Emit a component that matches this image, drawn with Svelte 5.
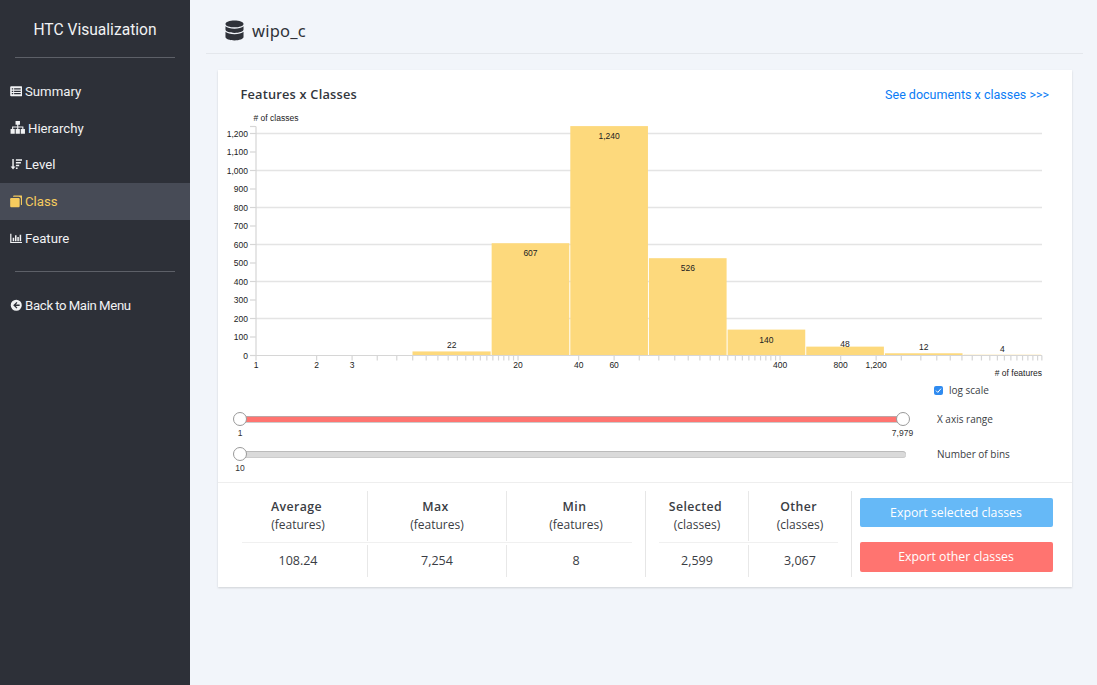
<script>
	const nav = ['Summary', 'Hierarchy', 'Level', 'Class', 'Feature'];

	// chart scales, in page pixels (the svg viewBox starts at the card's corner)
	const x0 = 256;
	const y0 = 355.5;
	const xScale = (v) => x0 + Math.log10(v) * 201.4;
	const yScale = (v) => y0 - v * 0.185;

	const yTicks = Array.from({ length: 13 }, (_, i) => i * 100);
	const xLabels = [1, 2, 3, 20, 40, 60, 400, 800, 1200];

	const xTicks = [];
	for (let v = 1; v <= 20; v += 1) xTicks.push(v);
	for (let v = 40; v <= 400; v += 20) xTicks.push(v);
	for (let v = 800; v <= 7600; v += 400) xTicks.push(v);
	xTicks.push(7979);

	const bins = [22, 607, 1240, 526, 140, 48, 12, 4];
	const binX = 412.5;
	const binW = 78.65;

	const fmt = (n) => n.toLocaleString('en-US');

	const featureStats = [
		{ title: 'Average', value: '108.24' },
		{ title: 'Max', value: '7,254' },
		{ title: 'Min', value: '8' }
	];
	const classStats = [
		{ title: 'Selected', value: '2,599' },
		{ title: 'Other', value: '3,067' }
	];
</script>

<div class="page">
	<aside class="sidebar">
		<div class="brand">HTC Visualization</div>
		<nav class="nav">
			{#each nav as item}
				<div class="nav-item" class:active={item === 'Class'}>
					<svg class="icon" viewBox="0 0 14 14" class:wide={item === 'Hierarchy'}>
						{#if item === 'Summary'}
							<path fill-rule="evenodd" d="M1.3 1.5h11.4a1.1 1.1 0 0 1 1.1 1.1v8.8a1.1 1.1 0 0 1-1.1 1.1H1.3a1.1 1.1 0 0 1-1.1-1.1V2.6a1.1 1.1 0 0 1 1.1-1.1zM2 3.7v1.4h1.6V3.7zm2.6 0v1.4H12V3.7zM2 6.3v1.4h1.6V6.3zm2.6 0v1.4H12V6.3zM2 8.9v1.4h1.6V8.9zm2.6 0v1.4H12V8.9z" />
						{:else if item === 'Hierarchy'}
							<path d="M5 .8h4v3.4H7.5v1.6h4.6v2.4h1.4v4.2H9.7V8.2h1.4V6.8H7.5v1.4h1.4v4.2H5.1V8.2h1.4V6.8H2.9v1.4h1.4v4.2H.5V8.2h1.4V5.8h4.6V4.2H5z" />
						{:else if item === 'Level'}
							<path d="M2.6 1h1.6v8.6h1.9L3.4 13 .7 9.6h1.9zM6.6 1.4H14v1.7H6.6zM6.600 4.500h5.600v1.700H6.600zM6.600 7.600h3.700v1.700H6.600zM6.600 10.700h1.900v1.700H6.600z" />
						{:else if item === 'Class'}
							<path d="M4.800.6h7.600c.9 0 1.500.6 1.500 1.500v7.600c0 .9-.6 1.500-1.500 1.500h-.2V4.300c0-1.300-1-2.300-2.300-2.300H3.400v-.1C3.400 1.100 4 .6 4.800.6z" />
							<path d="M1.600 3.400h7.800c.8 0 1.400.6 1.400 1.400v7.400c0 .8-.6 1.400-1.400 1.400H1.600C.8 13.600.2 13 .2 12.200V4.800c0-.8.6-1.400 1.400-1.400z" />
						{:else}
							<path d="M.2 2h1.400v9.100H14v1.300H.2zM3 6.500h1.700v3.800H3zM5.600 3.500h1.700v6.800H5.600zM8.200 5.500h1.700v4.800H8.200zM10.800 3h1.700v7.300h-1.700z" />
						{/if}
					</svg>
					<span>{item}</span>
				</div>
			{/each}
		</nav>
		<div class="back">
			<svg class="icon" viewBox="0 0 14 14">
				<path fill-rule="evenodd" d="M7 .8a6.200 6.200 0 1 1 0 12.400A6.200 6.200 0 0 1 7 .8zM7.300 3.300 3.600 7l3.700 3.700 1-1L6.500 7.900h4.300V6.100H6.500l1.800-1.800z" />
			</svg>
			<span>Back to Main Menu</span>
		</div>
	</aside>

	<main class="main">
		<header class="topbar">
			<svg class="db" viewBox="0 0 20 22">
				<path d="M10 .5c5 0 9.500 1.500 9.500 3.600S15 7.700 10 7.700.5 6.200.5 4.100 5 .5 10 .5z" />
				<path d="M.5 6.600C2.200 8.300 6 9.200 10 9.200s7.800-.9 9.500-2.600v3.300c0 2.100-4.500 3.600-9.500 3.600S.5 12 .5 9.900z" />
				<path d="M.5 12.400c1.700 1.700 5.500 2.600 9.500 2.600s7.800-.9 9.500-2.600v5.500c0 2.100-4.500 3.600-9.500 3.600S.5 20 .5 17.900z" />
			</svg>
			<span class="db-name">wipo_c</span>
		</header>

		<section class="card">
			<div class="card-head">
				<h2>Features x Classes</h2>
				<span class="link">See documents x classes &gt;&gt;&gt;</span>
			</div>

			<svg class="chart" width="854" height="272" viewBox="218 110 854 272">
				{#each yTicks as t}
					{#if t % 200 === 0 && t > 0}
						<line class="grid" x1={x0} x2="1042" y1={yScale(t)} y2={yScale(t)} />
					{/if}
					<line class="axis" x1="250" x2={x0} y1={yScale(t)} y2={yScale(t)} />
					<text class="tick" x="248" y={yScale(t) + 3.200} text-anchor="end">{fmt(t)}</text>
				{/each}
				<line class="axis" x1="250" x2={x0} y1="126.500" y2="126.500" />
				<line class="axis" x1={x0} x2={x0} y1="126.500" y2={y0} />
				<text class="tick" x="253.500" y="121">{'# of classes'}</text>

				{#each bins as n, i}
					<rect class="bar" x={binX + i * binW + (i ? 0.500 : 0)} y={yScale(n)} width={binW - (i ? 1 : 0.500)} height={y0 - yScale(n)} />
				{/each}
				{#each bins as n, i}
					<text class="tick" x={binX + (i + 0.500) * binW} y={n > 100 ? yScale(n) + 13 : (n === 48 ? yScale(n) + 0.500 : yScale(n) - 3)} text-anchor="middle">{fmt(n)}</text>
				{/each}

				<line class="axis" x1={x0} x2="1042" y1={y0} y2={y0} />
				{#each xTicks as t}
					<line class="axis" x1={xScale(t)} x2={xScale(t)} y1={y0} y2={y0 + 5} />
				{/each}
				{#each xLabels as t}
					<text class="tick" x={xScale(t)} y="368" text-anchor="middle">{fmt(t)}</text>
				{/each}
				<text class="tick" x="1042" y="376" text-anchor="end">{'# of features'}</text>
			</svg>

			<div class="log-row">
				<span class="check">
					<svg viewBox="0 0 9 9"><path d="M2 4.600 3.800 6.400 7 2.600" /></svg>
				</span>
				<span>log scale</span>
			</div>

			<div class="slider-row">
				<div class="slider red">
					<span class="handle start"><span class="val">1</span></span>
					<span class="handle end"><span class="val">7,979</span></span>
				</div>
				<span class="slider-label">X axis range</span>
			</div>
			<div class="slider-row">
				<div class="slider">
					<span class="handle start"><span class="val">10</span></span>
				</div>
				<span class="slider-label">Number of bins</span>
			</div>

			<div class="stats">
				<div class="group features">
					<div class="cells">
						{#each featureStats as s}
							<div class="cell"><strong>{s.title}</strong><span>(features)</span></div>
						{/each}
					</div>
					<div class="values">
						{#each featureStats as s}
							<div class="value">{s.value}</div>
						{/each}
					</div>
				</div>
				<div class="group classes">
					<div class="cells">
						{#each classStats as s}
							<div class="cell"><strong>{s.title}</strong><span>(classes)</span></div>
						{/each}
					</div>
					<div class="values">
						{#each classStats as s}
							<div class="value">{s.value}</div>
						{/each}
					</div>
				</div>
				<div class="actions">
					<button class="btn blue">Export selected classes</button>
					<button class="btn red">Export other classes</button>
				</div>
			</div>
		</section>
	</main>
</div>

<style>
	:global(body) {
		margin: 0;
		background: #f2f5fa;
	}

	.page {
		display: flex;
		width: 1097px;
		height: 685px;
		overflow: hidden;
		font-family: "Open Sans", "Noto Sans", sans-serif;
		color: #3a3d44;
	}

	.sidebar {
		flex: 0 0 190px;
		background: #2d3038;
		color: #f1f2f4;
		font-family: Roboto, "Noto Sans", sans-serif;
		font-size: 13.200px;
	}

	.brand {
		margin: 0 15px;
		height: 58px;
		line-height: 60px;
		text-align: center;
		font-size: 15.600px;
		border-bottom: 1.500px solid #5d6068;
		box-sizing: border-box;
	}

	.nav {
		margin-top: 15px;
		padding-bottom: 16px;
		position: relative;
	}

	.nav::after {
		content: '';
		position: absolute;
		left: 15px;
		right: 15px;
		bottom: 0;
		border-bottom: 1.500px solid #5d6068;
	}

	.nav-item {
		display: flex;
		align-items: center;
		height: 36.700px;
		padding-left: 9.500px;
		gap: 3px;
	}

	.nav-item.active {
		background: #474b56;
		color: #f6cb5e;
	}

	.icon {
		flex: none;
		width: 12.500px;
		height: 12.500px;
		fill: currentColor;
	}

	.icon.wide {
		width: 15.500px;
		height: 15.500px;
	}

	.back {
		display: flex;
		align-items: center;
		gap: 3px;
		padding-left: 9.500px;
		margin-top: 23px;
		height: 20px;
		letter-spacing: -0.300px;
		word-spacing: -0.600px;
	}

	.main {
		flex: 1;
		min-width: 0;
		padding: 0 25px 0 16px;
	}

	.topbar {
		display: flex;
		align-items: center;
		height: 54px;
		box-sizing: border-box;
		padding: 7px 0 0 18.500px;
		border-bottom: 1.500px solid #e4e7ec;
		gap: 8.500px;
		margin-right: -11px;
	}

	.db {
		width: 19px;
		height: 21px;
		fill: #2f3239;
	}

	.db-name {
		font-size: 16.500px;
		letter-spacing: 0.200px;
		color: #2f3239;
		font-family: "Noto Sans", sans-serif;
	}

	.card {
		width: 854px;
		margin: 15.500px 0 0 12px;
		background: #fff;
		box-shadow: 0 1px 2px rgba(0, 0, 0, 0.15);
	}

	.card-head {
		display: flex;
		justify-content: space-between;
		align-items: center;
		height: 40px;
		padding: 8px 23px 0 22.500px;
		box-sizing: border-box;
	}

	h2 {
		margin: 0;
		font-size: 12.800px;
		font-weight: 600;
		letter-spacing: 0.200px;
		color: #33363c;
	}

	.link {
		font-family: Roboto, sans-serif;
		font-size: 12.500px;
		color: #0a7cf5;
		padding-top: 1px;
	}

	.chart {
		display: block;
	}

	.grid {
		stroke: #e4e4e4;
		stroke-width: 1.300;
	}

	.axis {
		stroke: #d6d6d6;
		stroke-width: 1.200;
	}

	.tick {
		font-family: "Liberation Sans", Arial, sans-serif;
		font-size: 8.500px;
		fill: #222;
	}

	.bar {
		fill: #fdd97c;
	}

	.log-row {
		display: flex;
		align-items: center;
		height: 20px;
		padding-left: 716px;
		gap: 6px;
		font-size: 10px;
		margin-top: -2px;
		margin-bottom: 2px;
	}

	.check {
		display: flex;
		width: 9px;
		height: 9px;
		background: #2f8bf0;
		border-radius: 2px;
		margin-top: 2px;
	}

	.check svg {
		width: 9px;
		height: 9px;
		fill: none;
		stroke: #fff;
		stroke-width: 1;
	}

	.slider-row {
		display: flex;
		align-items: center;
		height: 35px;
		padding-left: 22px;
	}

	.slider {
		position: relative;
		width: 666px;
		height: 7px;
		border-radius: 4px;
		background: #dadada;
		box-shadow: inset 0 1px 0 #bbb, inset 0 -1px 0 #ccc;
	}

	.slider.red {
		background: #ff7470;
		box-shadow: inset 0 1px 0 #bfa5a5, inset 0 -1px 0 #ccc;
		width: 662px;
		margin-right: 4px;
	}

	.handle {
		position: absolute;
		top: -4px;
		width: 12px;
		height: 12px;
		background: #fff;
		border: 1.500px solid #999;
		border-radius: 50%;
	}

	.handle.start {
		left: -7px;
	}

	.handle.end {
		right: -7.500px;
	}

	.val {
		position: absolute;
		top: 15px;
		left: 50%;
		transform: translateX(-50%);
		font-family: "Liberation Sans", Arial, sans-serif;
		font-size: 8.500px;
		color: #333;
		white-space: nowrap;
	}

	.slider-label {
		margin-left: 31px;
		font-size: 10px;
	}

	.stats {
		display: flex;
		margin-top: 10px;
		padding: 8px 0 9.500px 11px;
		border-top: 1.500px solid #eee;
	}

	.group {
		display: flex;
		flex-direction: column;
		border-right: 1.500px solid #e6e6e6;
		box-sizing: border-box;
	}

	.features {
		flex: 0 0 417px;
	}

	.classes {
		flex: 0 0 206px;
	}

	.cells,
	.values {
		display: flex;
		flex: none;
	}

	.cells {
		height: 52.500px;
		position: relative;
	}

	.cells::after {
		content: '';
		position: absolute;
		left: 13px;
		right: 13px;
		bottom: 0;
		border-bottom: 1.500px solid #f0f0f0;
	}

	.cell,
	.value {
		flex: 1;
		text-align: center;
		box-sizing: border-box;
	}

	.cell:not(:last-child),
	.value:not(:last-child) {
		border-right: 1.500px solid #e8e8e8;
	}

	.cell {
		display: flex;
		flex-direction: column;
		height: 50px;
		padding-top: 7px;
		font-size: 12px;
		line-height: 18px;
	}

	.cell strong {
		font-weight: 600;
		font-size: 12.300px;
		letter-spacing: 0.400px;
		padding-right: 3px;
	}

	.values {
		margin-top: 2px;
	}

	.value {
		height: 32px;
		line-height: 32px;
		font-size: 12.500px;
	}

	.actions {
		display: flex;
		flex-direction: column;
		gap: 15px;
		padding: 7px 0 0 7.500px;
	}

	.btn {
		width: 193px;
		height: 29.500px;
		border: 0;
		border-radius: 2px;
		color: #fff;
		font-family: "Open Sans", sans-serif;
		font-size: 12.300px;
	}

	.btn.blue {
		background: #66b9f7;
	}

	.btn.red {
		background: #ff7470;
	}
</style>
